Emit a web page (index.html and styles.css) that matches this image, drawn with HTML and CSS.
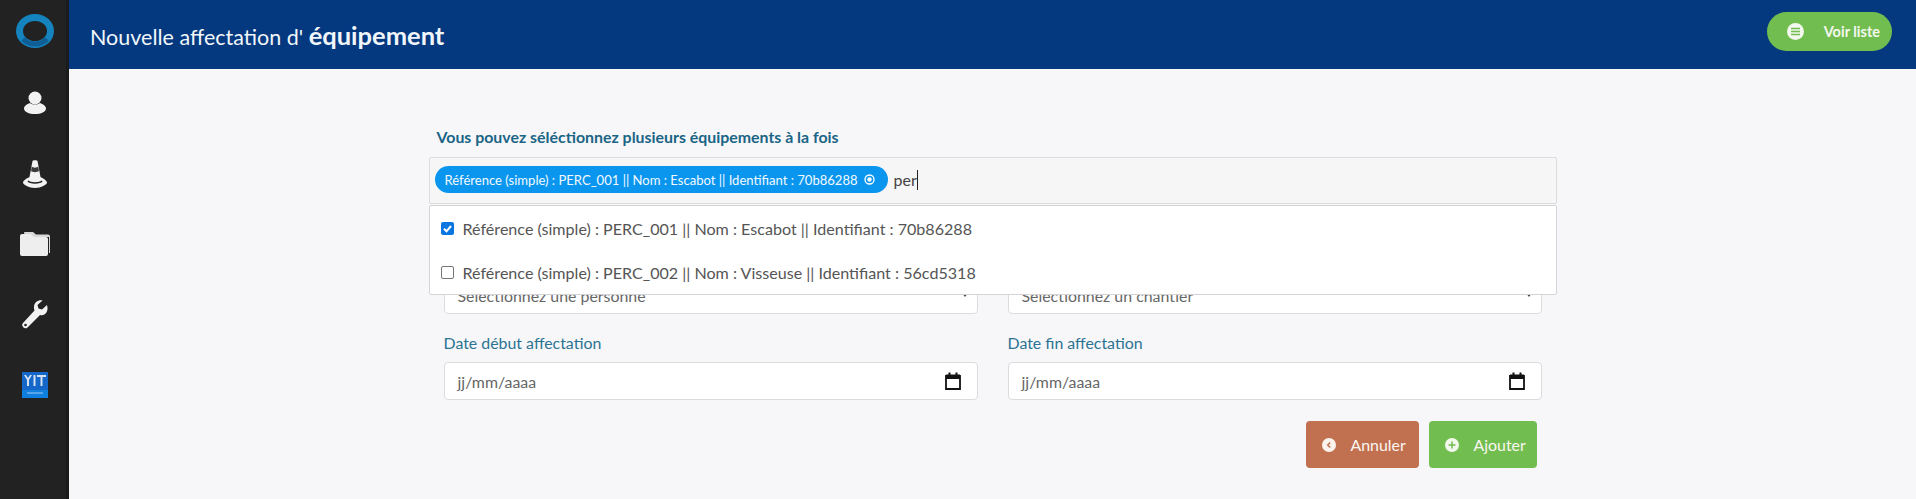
FILE: index.html
```html
<!DOCTYPE html>
<html lang="fr">
<head>
    <meta charset="UTF-8">
    <title>Nouvelle affectation d'équipement</title>
    <link rel="stylesheet" href="styles.css">
</head>
<body>
    <div class="app">
        <nav class="sidebar">
            <div class="logo">
                <svg width="40" height="38" viewBox="0 0 40 38"><ellipse cx="20" cy="19" rx="15.5" ry="13.5" fill="none" stroke="#1583bd" stroke-width="7"/><path d="M8 27a15.500 13.500 0 0 0 24 0" fill="none" stroke="#0f5f96" stroke-width="5"/></svg>
            </div>
            <a class="nav-item" href="#">
                <svg width="28" height="28" viewBox="0 0 28 28"><circle cx="14" cy="9" r="6.500" fill="#f2f2f2"/><path d="M9 14c-3 1-6 3-6 5.500C3 23 8 25 14 25s11-2 11-5.500c0-2.500-3-4.500-6-5.500-3 2-7 2-10 0z" fill="#f2f2f2"/></svg>
            </a>
            <a class="nav-item" href="#">
                <svg width="28" height="30" viewBox="0 0 28 30"><path d="M11.500 2c0-1 5-1 5 0l3 16c2 1 6 3 6.500 5.500.3 2-6 5.500-12 5.500S1.700 25.500 2 23.500C2.500 21 6.500 19 8.500 18z" fill="#f2f2f2"/><path d="M10.800 7.500c1 1.500 5.400 1.500 6.400 0l.8 4.500c-1.500 1.500-6.500 1.500-8 0z" fill="#3a3a3a"/><path d="M7 22c2 2.500 12 2.500 14 0" fill="none" stroke="#222" stroke-width="1.500"/></svg>
            </a>
            <a class="nav-item" href="#">
                <svg width="32" height="26" viewBox="0 0 32 26"><path d="M5 1h9l3 2.500h12a2 2 0 0 1 2 2V22h-1V6H6z" fill="#d8d8d8"/><path d="M3 3h9l3 3h12a2 2 0 0 1 2 2v15a2 2 0 0 1-2 2H3a2 2 0 0 1-2-2V5a2 2 0 0 1 2-2z" fill="#eeeeee"/></svg>
            </a>
            <a class="nav-item" href="#">
                <svg width="28" height="30" viewBox="0 0 28 30"><path d="M26 5l-5 4.500-3.500-1-1-3.500 5-4.500c-4-1-9 2-8.500 7.500 0 1 .2 1.800.5 2.500L2 23a3.200 3.200 0 0 0 4.500 4.500L19 15c5 1.500 9-3.500 7-10z" fill="#f2f2f2"/><circle cx="4.500" cy="25" r="1.300" fill="#222"/></svg>
            </a>
            <a class="nav-item" href="#">
                <svg width="26" height="26" viewBox="0 0 26 26"><rect width="26" height="26" y="0" fill="#1567c9"/><rect y="18" width="26" height="8" fill="#0f7fe0"/><path d="M2 3l3 5v6h2V8l3-5H8L6 6 4 3zM11.500 3h2v11h-2zM15 3h9v2h-3.500v9h-2V5H15z" fill="#d4e2f2"/><rect x="5" y="20" width="16" height="2" fill="#5aa5ea"/></svg>
            </a>
        </nav>
        <div class="main">
            <header class="topbar">
                <h1 class="title">Nouvelle affectation d' <b>équipement</b></h1>
                <a class="list-btn" href="#">
                    <svg width="17" height="17" viewBox="0 0 17 17"><circle cx="8.500" cy="8.500" r="8.500" fill="#f2f8ee"/><path d="M4 5.500h9M4 8.500h9M4 11.500h9" stroke="#72bd50" stroke-width="1.500"/></svg>
                    <span>Voir liste</span>
                </a>
            </header>
            <form class="form">
                <label class="multi-label">Vous pouvez séléctionnez plusieurs équipements à la fois</label>
                <div class="multi-wrap">
                    <div class="multi-box">
                        <span class="chip">Référence (simple) : PERC_001 || Nom : Escabot || Identifiant : 70b86288
                            <svg width="11" height="11" viewBox="0 0 11 11"><circle cx="5.500" cy="5.500" r="4.500" fill="none" stroke="#fff" stroke-width="1.300"/><circle cx="5.500" cy="5.500" r="2.200" fill="#fff"/></svg>
                        </span>
                        <span class="typed">per</span>
                    </div>
                    <ul class="dropdown">
                        <li class="option"><span class="check checked"><svg width="13" height="13" viewBox="0 0 13 13"><path d="M3 6.800l2.500 2.500L10 4" fill="none" stroke="#fff" stroke-width="2"/></svg></span>Référence (simple) : PERC_001 || Nom : Escabot || Identifiant : 70b86288</li>
                        <li class="option"><span class="check"></span>Référence (simple) : PERC_002 || Nom : Visseuse || Identifiant : 56cd5318</li>
                    </ul>
                </div>
                <div class="fields">
                    <div class="field">
                        <label>Personne</label>
                        <div class="control">Sélectionnez une personne<span class="caret"></span></div>
                    </div>
                    <div class="field">
                        <label>Chantier</label>
                        <div class="control">Sélectionnez un chantier<span class="caret"></span></div>
                    </div>
                    <div class="field">
                        <label>Date début affectation</label>
                        <div class="control date">jj/mm/aaaa
                            <svg width="16" height="18" viewBox="0 0 16 18"><path d="M1 4h14v13H1z" fill="none" stroke="#111" stroke-width="1.800"/><path d="M1 2.500h14V7H1zM3.500 0.500h2V3h-2zM10.500 0.500h2V3h-2z" fill="#111"/></svg>
                        </div>
                    </div>
                    <div class="field">
                        <label>Date fin affectation</label>
                        <div class="control date">jj/mm/aaaa
                            <svg width="16" height="18" viewBox="0 0 16 18"><path d="M1 4h14v13H1z" fill="none" stroke="#111" stroke-width="1.800"/><path d="M1 2.500h14V7H1zM3.500 0.500h2V3h-2zM10.500 0.500h2V3h-2z" fill="#111"/></svg>
                        </div>
                    </div>
                </div>
                <div class="actions">
                    <button type="button" class="btn btn-cancel">
                        <svg width="14" height="14" viewBox="0 0 14 14"><circle cx="7" cy="7" r="7" fill="#fbf3ee"/><path d="M8.200 4.500L5.700 7l2.500 2.500" fill="none" stroke="#c1714f" stroke-width="1.500"/></svg>
                        Annuler
                    </button>
                    <button type="button" class="btn btn-add">
                        <svg width="14" height="14" viewBox="0 0 14 14"><circle cx="7" cy="7" r="7" fill="#f2f8ee"/><path d="M7 3.500v7M3.500 7h7" stroke="#72bd50" stroke-width="1.500"/></svg>
                        Ajouter
                    </button>
                </div>
            </form>
        </div>
    </div>
</body>
</html>
```

FILE: styles.css
```css
* {
    box-sizing: border-box;
}
body {
    margin: 0;
    font-family: Lato, "Open Sans", sans-serif;
    background-color: #f7f7fa;
    color: #555;
    overflow: hidden;
}
.app {
    display: flex;
    height: 499px;
}
.sidebar {
    width: 69px;
    flex: none;
    background-color: #222222;
    border-right: 3px solid #1b1b1b;
    display: flex;
    flex-direction: column;
    align-items: center;
}
.logo {
    width: 69px;
    height: 68px;
    margin-right: -3px;
    padding-top: 12px;
    display: flex;
    justify-content: center;
    align-items: flex-start;
}
.nav-item {
    height: 70.500px;
    margin-right: -3px;
    display: flex;
    align-items: center;
    justify-content: center;
}
.main {
    flex: 1;
    min-width: 0;
}
.topbar {
    height: 69px;
    padding: 0 24px 0 21px;
    background-color: #04397f;
    display: flex;
    align-items: center;
    justify-content: space-between;
}
.title {
    margin: 0;
    font-size: 21.500px;
    font-weight: 400;
    color: #f1f6fa;
}
.title b {
    font-size: 25.500px;
    font-weight: 700;
}
.list-btn {
    width: 125px;
    height: 39px;
    padding: 0 12px 0 20px;
    border-radius: 20px;
    background-color: #72bd50;
    color: #f2f8ee;
    font-size: 14.500px;
    font-weight: 700;
    text-decoration: none;
    display: flex;
    align-items: center;
    justify-content: space-between;
    margin-top: -7px;
}
.form {
    width: 1128px;
    margin: 0 auto;
    padding-top: 58px;
}
.multi-label {
    display: block;
    height: 30px;
    padding-left: 8px;
    line-height: 20px;
    font-size: 15.900px;
    font-weight: 700;
    color: #1a6585;
}
.multi-wrap {
    position: relative;
}
.multi-box {
    height: 47px;
    padding: 0 0 2px 5px;
    background-color: #f6f6f7;
    border: 1px solid #dcdcdc;
    border-radius: 2px;
    display: flex;
    align-items: center;
    gap: 6px;
}
.chip {
    height: 27px;
    padding: 0 13px 0 10px;
    border-radius: 14px;
    background-color: #0a96ef;
    color: #f2f9fe;
    font-size: 13.050px;
    display: flex;
    align-items: center;
    gap: 6px;
}
.typed {
    font-size: 16px;
    color: #444;
    border-right: 1px solid #222;
    line-height: 20px;
}
.dropdown {
    position: absolute;
    top: 48px;
    left: 0;
    right: 0;
    height: 90px;
    margin: 0;
    padding: 0;
    list-style: none;
    background-color: #fff;
    border: 1px solid #d4d4d8;
    border-radius: 2px;
    z-index: 2;
}
.option {
    height: 44px;
    padding-left: 11px;
    font-size: 16.100px;
    color: #555;
    display: flex;
    align-items: center;
    gap: 9px;
}
.check {
    width: 13px;
    height: 13px;
    flex: none;
    border: 1px solid #767676;
    border-radius: 2px;
    background-color: #fff;
}
.check.checked {
    border: none;
    background-color: #0a76e0;
}
.check svg {
    display: block;
}
.fields {
    padding: 0 15px;
    margin-top: 40px;
    display: grid;
    grid-template-columns: 534px 534px;
    column-gap: 30px;
    row-gap: 16px;
}
.field label {
    display: block;
    height: 32px;
    line-height: 26px;
    font-size: 15.900px;
    color: #2b7391;
}
.control {
    height: 38px;
    padding: 0 13px;
    background-color: #fff;
    border: 1px solid #dcdcdf;
    border-radius: 4px;
    font-size: 15.900px;
    color: #666;
    display: flex;
    align-items: center;
    justify-content: space-between;
}
.control.date {
    padding-right: 16px;
}
.caret {
    margin-right: -4px;
    border-top: 4px solid #444;
    border-left: 3px solid transparent;
    border-right: 3px solid transparent;
}
.actions {
    margin-top: 21px;
    padding-right: 20px;
    display: flex;
    justify-content: flex-end;
    gap: 10px;
}
.btn {
    height: 47px;
    padding: 0 9px 0 16px;
    border: none;
    border-radius: 4px;
    font-family: inherit;
    font-size: 15.900px;
    color: #fbf6f2;
    display: flex;
    align-items: center;
    gap: 15px;
}
.btn-cancel {
    width: 113px;
    background-color: #c1714f;
}
.btn-add {
    width: 108px;
    background-color: #72bd50;
}
```
